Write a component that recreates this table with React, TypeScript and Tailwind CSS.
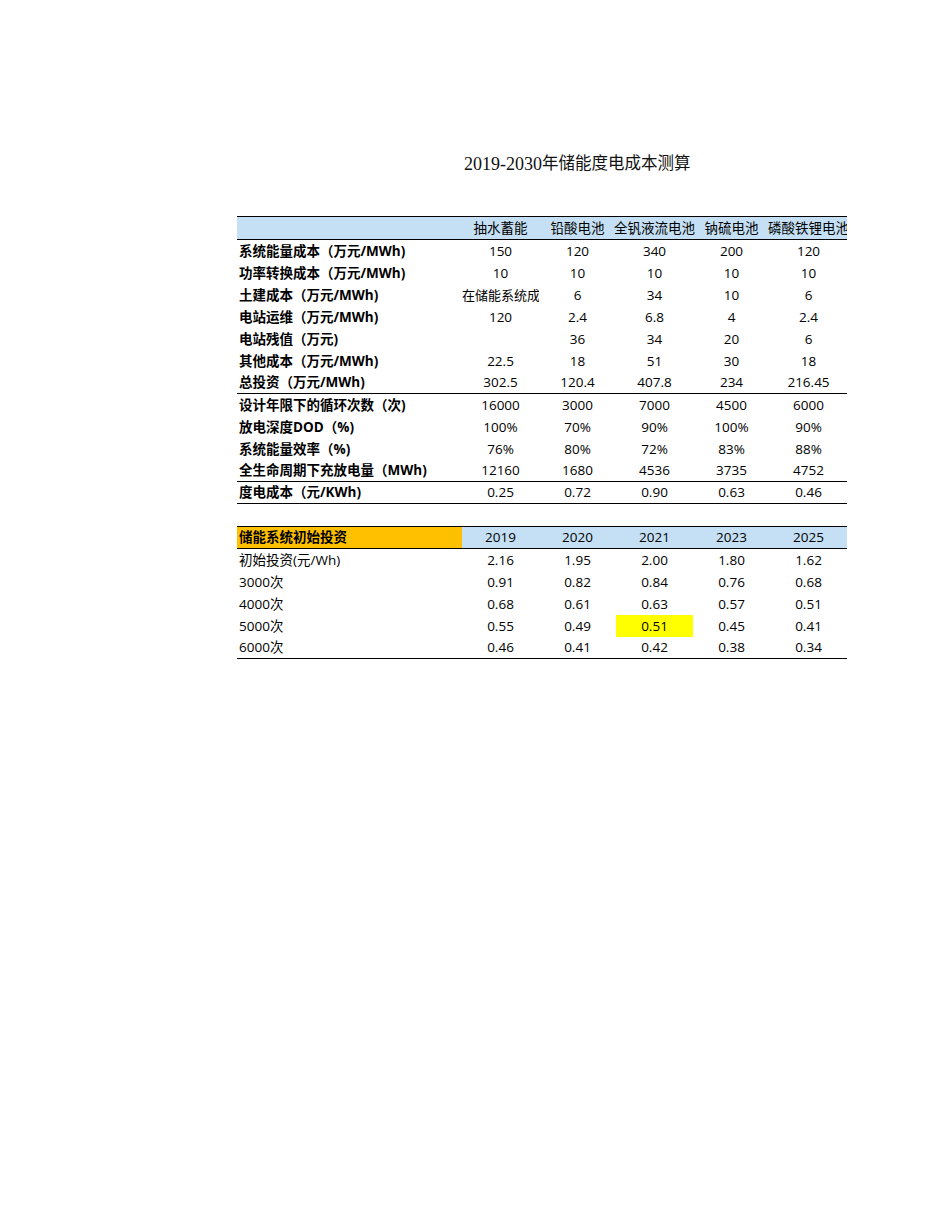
import React from "react";

const font = "font-['Open_Sans','Noto_Sans_CJK_SC',sans-serif]";

type Row = { label: string; values: string[]; line?: boolean };

const costRows: Row[] = [
  { label: "系统能量成本（万元/MWh)", values: ["150", "120", "340", "200", "120"] },
  { label: "功率转换成本（万元/MWh)", values: ["10", "10", "10", "10", "10"] },
  { label: "土建成本（万元/MWh)", values: ["在储能系统成本中", "6", "34", "10", "6"] },
  { label: "电站运维（万元/MWh)", values: ["120", "2.4", "6.8", "4", "2.4"] },
  { label: "电站残值（万元)", values: ["", "36", "34", "20", "6"] },
  { label: "其他成本（万元/MWh)", values: ["22.5", "18", "51", "30", "18"] },
  { label: "总投资（万元/MWh)", values: ["302.5", "120.4", "407.8", "234", "216.45"], line: true },
  { label: "设计年限下的循环次数（次)", values: ["16000", "3000", "7000", "4500", "6000"] },
  { label: "放电深度DOD（%)", values: ["100%", "70%", "90%", "100%", "90%"] },
  { label: "系统能量效率（%)", values: ["76%", "80%", "72%", "83%", "88%"] },
  { label: "全生命周期下充放电量（MWh)", values: ["12160", "1680", "4536", "3735", "4752"], line: true },
  { label: "度电成本（元/KWh)", values: ["0.25", "0.72", "0.90", "0.63", "0.46"], line: true },
];

const investRows: Row[] = [
  { label: "初始投资(元/Wh)", values: ["2.16", "1.95", "2.00", "1.80", "1.62"] },
  { label: "3000次", values: ["0.91", "0.82", "0.84", "0.76", "0.68"] },
  { label: "4000次", values: ["0.68", "0.61", "0.63", "0.57", "0.51"] },
  { label: "5000次", values: ["0.55", "0.49", "0.51", "0.45", "0.41"] },
  { label: "6000次", values: ["0.46", "0.41", "0.42", "0.38", "0.34"], line: true },
];

const gridCols = "grid grid-cols-[225px_repeat(5,77px)]";

const App = () => {
  return (
    <div className={`w-[950px] min-h-[1230px] bg-white text-black ${font}`}>
      <div className="pt-[153px] pl-[237px]">
        <div className="ml-[227px] flex h-[22px] items-center whitespace-nowrap font-['Liberation_Serif','Noto_Sans_CJK_SC',serif] text-[18px] leading-none text-[#111]">
          <span>2019-2030</span>
          <span className="text-[16.5px]">年储能度电成本测算</span>
        </div>

        {/* cost table */}
        <div className="mt-[41px] w-[610px] overflow-hidden text-[13.5px]">
          <div className={`${gridCols} h-[24px] border-y border-black bg-[#c5e0f4]`}>
            <div />
            {["抽水蓄能", "铅酸电池", "全钒液流电池", "钠硫电池", "磷酸铁锂电池"].map((h) => (
              <div key={h} className="flex items-center justify-center whitespace-nowrap pt-[1px] leading-none">
                {h}
              </div>
            ))}
          </div>
          {costRows.map((r) => (
            <div
              key={r.label}
              className={`${gridCols} h-[22px] ${r.line ? "border-b border-black" : ""}`}
            >
              <div className="flex items-center whitespace-nowrap pl-[2px] pt-[1px] font-bold leading-none">
                {r.label}
              </div>
              {r.values.map((v, i) =>
                v.length > 7 ? (
                  <div key={i} className="flex items-center overflow-hidden whitespace-nowrap pt-[1px] text-[13px] leading-none">
                    {v}
                  </div>
                ) : (
                  <div key={i} className="flex items-center justify-center pt-[1px] leading-none">
                    {v}
                  </div>
                )
              )}
            </div>
          ))}
        </div>

        {/* investment table */}
        <div className="mt-[22px] w-[610px] overflow-hidden text-[13.5px]">
          <div className={`${gridCols} h-[23px] border-y border-black`}>
            <div className="flex items-center bg-[#ffc000] pl-[2px] pt-[1px] font-bold leading-none">
              储能系统初始投资
            </div>
            {["2019", "2020", "2021", "2023", "2025"].map((y) => (
              <div key={y} className="flex items-center justify-center bg-[#c5e0f4] pt-[1px] leading-none">
                {y}
              </div>
            ))}
          </div>
          {investRows.map((r) => (
            <div
              key={r.label}
              className={`${gridCols} h-[22px] ${r.line ? "border-b border-black" : ""}`}
            >
              <div className="flex items-center whitespace-nowrap pl-[2px] pt-[1px] leading-none">{r.label}</div>
              {r.values.map((v, i) => (
                <div
                  key={i}
                  className={`flex items-center justify-center pt-[1px] leading-none ${
                    r.label === "5000次" && i === 2 ? "bg-[#ffff00]" : ""
                  }`}
                >
                  {v}
                </div>
              ))}
            </div>
          ))}
        </div>
      </div>
    </div>
  );
};

export default App;
